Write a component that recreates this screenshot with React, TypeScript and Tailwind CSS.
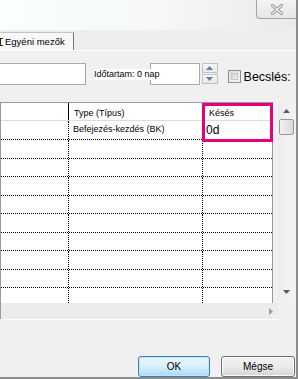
import React from "react";

const rowHeights = [19, 19, 18, 19, 18, 19, 18, 19, 18, 15];

export default function App() {
  return (
    <div className="w-[298px] h-[379px] overflow-hidden bg-[#f0f0f0] flex flex-col border-r-2 border-b-2 border-r-[#8c8c8c] border-b-[#8c8c8c] font-['Liberation_Sans',Arial,sans-serif] text-black relative">
      {/* title bar */}
      <div className="h-[30px] shrink-0 flex justify-end items-start bg-gradient-to-r from-[#f9feff] via-[#f6f8f9] to-[#eaeaea]">
        <div className="w-[40px] h-[19px] border-l border-b border-[#a4a4a4] rounded-bl-[4px] flex items-center justify-center bg-gradient-to-b from-[#f4f4f4] to-[#e6e6e6]">
          <svg width="12" height="11" viewBox="0 0 12 11">
            <path d="M1.5 1.5 L10.5 9.5 M10.5 1.5 L1.5 9.5" stroke="#9a9a9a" strokeWidth="3.2" strokeLinecap="square" />
            <path d="M1.5 1.5 L10.5 9.5 M10.5 1.5 L1.5 9.5" stroke="#f2f2f2" strokeWidth="1.2" strokeLinecap="square" />
          </svg>
        </div>
      </div>
      {/* tab strip */}
      <div className="h-[20px] shrink-0 flex items-end bg-[#eeeeee]">
        <div className="h-[18px] w-[74px] border-t border-r border-t-[#c4c4c4] border-r-[#7a7a7a] bg-[#f7f7f7] flex items-center overflow-hidden">
          <span className="w-[3px] h-[8px] border-l border-t border-b border-[#222] mr-[2px] mt-[1px]" />
          <span className="text-[9.5px] leading-none whitespace-nowrap">Egyéni mezők</span>
        </div>
      </div>
      <div className="h-px shrink-0 bg-white" />
      {/* body */}
      <div className="flex-1 flex flex-col">
        <div className="mt-[12px] h-[22px] flex items-center">
          <div className="-ml-px w-[87px] h-[22px] bg-white border border-[#a9a9a9]" />
          <span className="ml-[8px] relative z-10 bg-white text-[9px] leading-[11px] whitespace-nowrap pr-[1px]">Időtartam: 0 nap</span>
          <div className="-ml-[11px] w-[50px] h-[22px] bg-white border border-[#a9a9a9]" />
          <div className="ml-[2px] w-[16px] h-[22px] flex flex-col gap-[1px]">
            <div className="h-[10px] border border-[#c0c0c0] bg-gradient-to-b from-[#f8f8f8] to-[#e8e8e8] flex items-center justify-center">
              <svg width="7" height="4" viewBox="0 0 7 4"><path d="M0 4 L3.5 0 L7 4 Z" fill="#5b7fa6" /></svg>
            </div>
            <div className="h-[10px] border border-[#c0c0c0] bg-gradient-to-b from-[#f8f8f8] to-[#e8e8e8] flex items-center justify-center">
              <svg width="7" height="4" viewBox="0 0 7 4"><path d="M0 0 L3.5 4 L7 0 Z" fill="#5b7fa6" /></svg>
            </div>
          </div>
          <div className="ml-[10px] mt-[4px] w-[13px] h-[13px] border border-[#8f8f8f] bg-gradient-to-br from-[#dcdcdc] to-[#f6f6f6] p-[2px]">
            <div className="w-full h-full border border-[#c8c8c8] bg-gradient-to-br from-[#d0d0d0] to-[#f0f0f0]" />
          </div>
          <span className="ml-[3px] mt-[6px] text-[12.5px] leading-none whitespace-nowrap">Becslés:</span>
        </div>
        {/* grid region */}
        <div className="mt-[17px] flex relative">
          <div className="w-[278px] flex flex-col">
            <div className="flex">
              <div className="w-[273px] border-t border-r border-l border-[#9a9a9a] bg-white flex flex-col">
                {/* header */}
                <div className="h-[18px] flex border-b border-[#dcdcdc]">
                  <div className="w-[68px] border-r border-[#000]" />
                  <div className="w-[134px] border-r border-[#d0d0d0] flex items-end pb-[2px] pl-[5px] text-[9px] leading-none whitespace-nowrap">Type (Típus)</div>
                  <div className="flex-1 flex items-end pb-[2px] pl-[6px] text-[9px] leading-none">Késés</div>
                </div>
                {rowHeights.map((h, i) => (
                  <div
                    key={i}
                    style={{ height: h }}
                    className={`flex ${i < 9 ? "border-b border-dotted border-b-black" : ""}`}
                  >
                    <div className="w-[68px] border-r border-dotted border-r-black" />
                    <div className="w-[134px] border-r border-dotted border-r-black flex items-center pl-[4px] text-[9px] whitespace-nowrap">{i === 0 ? "Befejezés-kezdés (BK)" : ""}</div>
                    <div className="flex-1 flex items-center pl-[3px] text-[12px] leading-none">{i === 0 ? "0d" : ""}</div>
                  </div>
                ))}
              </div>
            </div>
            {/* hscroll */}
            <div className="h-[16px] bg-[#ececec] border-l border-[#9a9a9a] flex items-center justify-end pr-[5px]">
              <svg width="4" height="7" viewBox="0 0 4 7"><path d="M0 0 L4 3.5 L0 7 Z" fill="#9a9a9a" /></svg>
            </div>
            <div className="h-px bg-white" />
          </div>
          {/* vscroll */}
          <div className="w-[17px] h-[198px] bg-gradient-to-r from-[#ececec] to-[#f4f4f4] flex flex-col items-center">
            <div className="h-[17px] flex items-center justify-center">
              <svg width="7" height="4" viewBox="0 0 7 4"><path d="M0 4 L3.5 0 L7 4 Z" fill="#5a5a5a" /></svg>
            </div>
            <div className="w-[15px] h-[16px] border border-[#9a9a9a] rounded-[2px] bg-gradient-to-r from-[#f2f2f2] to-[#dadada]" />
            <div className="flex-1" />
            <div className="h-[17px] flex items-center justify-center">
              <svg width="7" height="4" viewBox="0 0 7 4"><path d="M0 0 L3.5 4 L7 0 Z" fill="#5a5a5a" /></svg>
            </div>
          </div>
          {/* magenta annotation */}
          <div className="absolute left-[202px] top-[1px] w-[71px] h-[39px] border-[3px] border-[#e5007d]" />
        </div>
        {/* buttons */}
        <div className="mt-[36px] flex justify-end gap-[11px] pr-[1px]">
          <div className="w-[72px] h-[21px] rounded-[3px] border border-[#3c7fb1] bg-gradient-to-b from-[#eaf6fd] via-[#d9f0fc] to-[#a7d9f5] flex items-center justify-center text-[10px] shadow-[inset_0_0_0_1px_#bfe7fb]">OK</div>
          <div className="w-[74px] h-[21px] rounded-[3px] border border-[#707070] bg-gradient-to-b from-[#f2f2f2] via-[#ebebeb] to-[#d4d4d4] flex items-center justify-center text-[10px] shadow-[inset_0_0_0_1px_#fcfcfc]">Mégse</div>
        </div>
      </div>
    </div>
  );
}
